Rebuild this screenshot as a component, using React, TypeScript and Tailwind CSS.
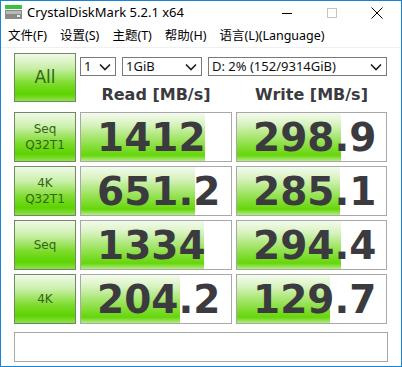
import React from "react";

interface Row {
  label: string[];
  read: string;
  write: string;
}

const rows: Row[] = [
  { label: ["Seq", "Q32T1"], read: "1412", write: "298.9" },
  { label: ["4K", "Q32T1"], read: "651.2", write: "285.1" },
  { label: ["Seq"], read: "1334", write: "294.4" },
  { label: ["4K"], read: "204.2", write: "129.7" },
];

const menus = ["文件(F)", "设置(S)", "主题(T)", "帮助(H)", "语言(L)(Language)"];

// bar length follows a log scale, like the real app
const barWidth = (v: string) => Math.round(29.8 * Math.log10(parseFloat(v)) + 30.2);

const Chevron = () => (
  <svg width="12" height="8" viewBox="0 0 12 8" className="shrink-0">
    <path d="M1 1.5 L6 6.5 L11 1.5" fill="none" stroke="#222" strokeWidth="1.7" />
  </svg>
);

const Select = ({ text, className }: { text: string; className: string }) => (
  <div
    className={`h-[19px] bg-white border border-[#7a7a7a] flex items-center justify-between pl-[3px] pr-[4px] text-[13px] text-[#111] ${className}`}
  >
    <span>{text}</span>
    <Chevron />
  </div>
);

const GreenButton = ({ children, className = "" }: { children: React.ReactNode; className?: string }) => (
  <div
    className={`border border-[#6e8a62] bg-[linear-gradient(to_bottom,#f1f9ea,#c9efa8_30%,#7edc2e_62%,#5cd300_85%,#8fe04c)] flex flex-col items-center justify-center text-[#336515] ${className}`}
    style={{ fontFamily: '"DejaVu Sans", sans-serif' }}
  >
    {children}
  </div>
);

const ValueCell = ({ value }: { value: string }) => (
  <div className="relative h-[50px] bg-white border border-[#a8a8a8] overflow-hidden">
    <div
      className="absolute left-0 top-0 bottom-0 bg-[linear-gradient(to_bottom,#f4fbee,#d6f2bd_25%,#96e254_60%,#66d60a_88%,#b4ec86)]"
      style={{ width: barWidth(value) }}
    />
    <div
      className="relative h-full flex items-center pl-[16px] text-[39px] font-bold text-[#3a3a3f] leading-none"
      style={{ fontFamily: '"DejaVu Sans", Verdana, sans-serif' }}
    >
      {value}
    </div>
  </div>
);

export default function App() {
  return (
    <div
      className="w-[402px] h-[367px] bg-white border border-[#1883d7] flex flex-col overflow-hidden"
      style={{ fontFamily: '"Noto Sans", "Noto Sans CJK SC", sans-serif' }}
    >
      {/* Title bar */}
      <div className="h-[24px] flex items-center shrink-0">
        <svg width="18" height="16" viewBox="0 0 18 16" className="ml-[4px]">
          <rect x="0" y="0" width="17" height="4" fill="#3fbf3f" />
          <rect x="0" y="5" width="17" height="9" fill="#8a8a8a" />
          <rect x="1" y="6" width="15" height="3" fill="#b8b8b8" />
          <rect x="12" y="10" width="3" height="2" fill="#e8e8e8" />
        </svg>
        <span className="ml-[4px] text-[13px] text-black">CrystalDiskMark 5.2.1 x64</span>
        <div className="ml-auto flex items-center">
          <div className="w-[45px] flex justify-center">
            <div className="w-[10px] h-px bg-black" />
          </div>
          <div className="w-[45px] flex justify-center">
            <div className="w-[10px] h-[10px] border border-[#c4c4c4]" />
          </div>
          <div className="w-[46px] flex justify-center mr-[1px]">
            <svg width="12" height="12" viewBox="0 0 12 12">
              <path d="M0.5 0.5 L11.5 11.5 M11.5 0.5 L0.5 11.5" stroke="#000" strokeWidth="1" />
            </svg>
          </div>
        </div>
      </div>

      {/* Menu */}
      <div className="h-[23px] flex items-center gap-[13px] pl-[7px] text-[12.5px] text-black border-b border-[#f0f0f0] shrink-0">
        {menus.map((m) => (
          <span key={m}>{m}</span>
        ))}
      </div>

      {/* Main grid */}
      <div className="px-[13px] pt-[5px] grid grid-cols-[62px_152px_151px] gap-x-[4px]">
        <GreenButton className="h-[49px] text-[17px]">All</GreenButton>
        <div className="col-span-2 flex flex-col">
          <div className="flex gap-[6px] pt-[4px]">
            <Select text="1" className="w-[36px]" />
            <Select text="1GiB" className="w-[80px]" />
            <Select text="D: 2% (152/9314GiB)" className="w-[179px]" />
          </div>
          <div
            className="flex mt-[7px] text-[16px] font-bold text-[#3a3a3f]"
            style={{ fontFamily: '"DejaVu Sans", Verdana, sans-serif' }}
          >
            <div className="w-[152px] text-center">Read [MB/s]</div>
            <div className="w-[4px]" />
            <div className="w-[151px] text-center">Write [MB/s]</div>
          </div>
        </div>
      </div>

      <div className="px-[13px] pt-[5px] grid grid-cols-[62px_152px_151px] gap-x-[4px] gap-y-[4px]">
        {rows.map((r) => (
          <React.Fragment key={r.label.join("") + r.read}>
            <GreenButton className="h-[50px] text-[12px] leading-[16px]">
              {r.label.map((l) => (
                <span key={l}>{l}</span>
              ))}
            </GreenButton>
            <ValueCell value={r.read} />
            <ValueCell value={r.write} />
          </React.Fragment>
        ))}
      </div>

      {/* Comment box */}
      <div className="mx-[13px] mt-[8px] h-[30px] bg-white border border-[#a8a8a8]" />
    </div>
  );
}
